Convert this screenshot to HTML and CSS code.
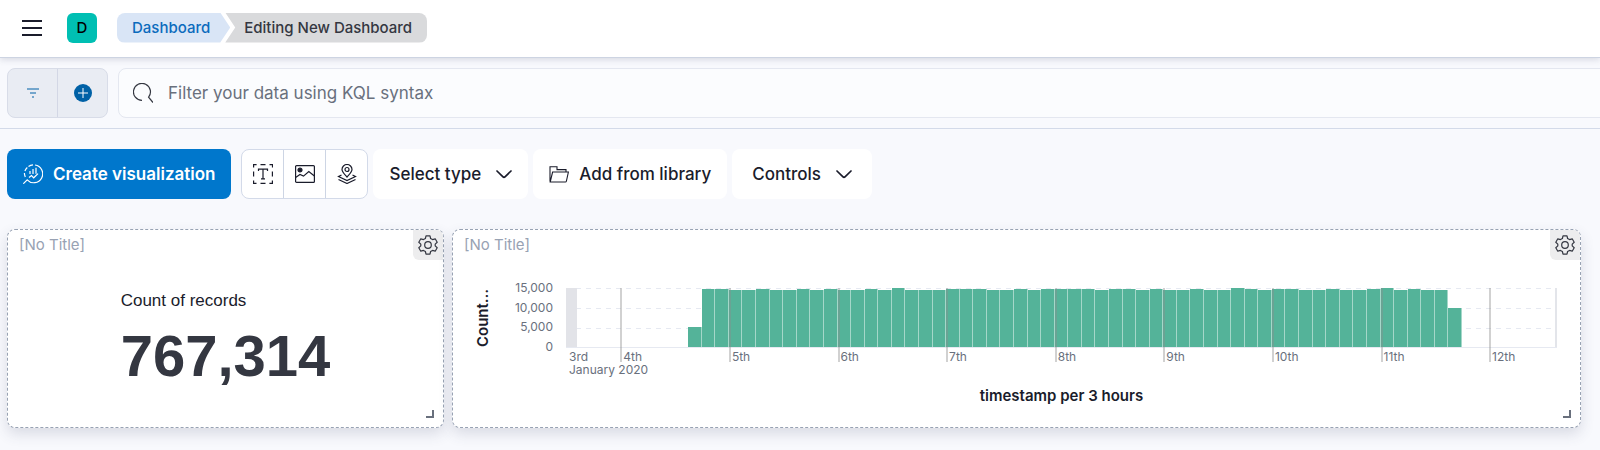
FILE: index.html
```html
<!DOCTYPE html>
<html lang="en">
<head>
  <meta charset="UTF-8">
  <meta name="viewport" content="width=device-width, initial-scale=1.0">
  <title>Editing New Dashboard</title>
  <link rel="stylesheet" href="styles.css">
</head>
<body>
  <header class="header">
    <button class="menu-button" aria-label="Menu">
      <svg width="20" height="16" viewBox="0 0 20 16" stroke="currentColor" stroke-width="2"><path d="M0 1h20M0 8h20M0 15h20"/></svg>
    </button>
    <span class="space-avatar">D</span>
    <nav class="breadcrumbs" aria-label="Breadcrumbs">
      <a class="crumb" href="#">Dashboard</a>
      <span class="crumb current" aria-current="page">Editing New Dashboard</span>
    </nav>
  </header>

  <form class="query-bar">
    <div class="filter-group">
      <button type="button" aria-label="Saved queries">
        <svg width="12" height="10" viewBox="0 0 12 10" stroke="currentColor"><path d="M0 1h12M3 5h6M5 9h2"/></svg>
      </button>
      <button type="button" aria-label="Add filter">
        <svg width="18" height="18" viewBox="0 0 18 18"><circle cx="9" cy="9" r="9" fill="currentColor"/><path d="M9 4v10M4 9h10" stroke="#fff"/></svg>
      </button>
    </div>
    <div class="search">
      <svg width="20" height="20" viewBox="0 0 20 20" fill="none" stroke="currentColor" stroke-width="1.2"><path d="M9 17.4A8.5 8.5 0 1 1 15.6 14.200L20 19.500"/></svg>
      <input type="text" aria-label="Search" placeholder="Filter your data using KQL syntax">
    </div>
  </form>

  <div class="toolbar">
    <button class="create-button">
      <svg width="20" height="20" viewBox="0 0 20 20" fill="none" stroke="currentColor" stroke-width="1.2">
        <path d="M.3 19.700 4.200 15.800A8.900 8.900 0 1 0 12 1M10 .8A8.900 8.900 0 0 0 5.500 2.400M4.300 3.500A8.900 8.900 0 0 0 1.900 7M1.400 9A8.900 8.900 0 0 0 2.300 13"/>
        <path d="M7 7v3M10 5v5M13 3.800v6M6 13.500l2.500-2 2.200 2.300 4.300-4.200"/>
      </svg>
      Create visualization
    </button>
    <div class="icon-group">
      <button aria-label="Add text">
        <svg width="20" height="20" viewBox="0 0 20 20" fill="none" stroke="currentColor" stroke-width="1.200"><path d="M.6 3.500V.6h3M7.500.6h5M16.500.6h3v2.900M19.400 7.500v5M19.400 16.500v2.900h-3M12.500 19.400h-5M3.500 19.400H.6v-2.900M.6 12.500v-5M5.500 7V5.200h9V7M10 5.200v9.600M8 14.800h4"/></svg>
      </button>
      <button aria-label="Add image">
        <svg width="20" height="18" viewBox="0 0 20 18" fill="none" stroke="currentColor" stroke-width="1.200"><rect x=".6" y=".6" width="18.800" height="16.800" rx="1"/><circle cx="5" cy="5" r="2" fill="currentColor"/><path d="M.6 12.500 5 9.500l3.500 1.600L13.800 6.500l5.600 4.500"/></svg>
      </button>
      <button aria-label="Add map">
        <svg width="20" height="20" viewBox="0 0 20 20" fill="none" stroke="currentColor" stroke-width="1.200"><path d="M10 13C7.500 10.200 5 8 5 5.500a5 5 0 0 1 10 0C15 8 12.500 10.200 10 13z"/><circle cx="10" cy="5.500" r="2"/><path d="M4.500 11 1.500 12.500l8.500 4 8.500-4-3-1.500M1.500 15.500l8.500 4 8.500-4"/></svg>
      </button>
    </div>
    <button class="tool-button">
      Select type
      <svg width="16" height="9" viewBox="0 0 16 9" fill="none" stroke="currentColor" stroke-width="1.700" stroke-linecap="round"><path d="M1 1l6 5.800q1 .9 2 0L15 1"/></svg>
    </button>
    <button class="tool-button library">
      <svg width="20" height="17" viewBox="0 0 20 17" fill="none" stroke="currentColor" stroke-width="1.100"><path d="M1 15.500V.8h7v2.800h9V6M1.200 16 3.600 6H19.400l-2 9.200q-.2.800-1 .8z"/></svg>
      Add from library
    </button>
    <button class="tool-button controls">
      Controls
      <svg width="16" height="9" viewBox="0 0 16 9" fill="none" stroke="currentColor" stroke-width="1.700" stroke-linecap="round"><path d="M1 1l6 5.800q1 .9 2 0L15 1"/></svg>
    </button>
  </div>

  <main class="dashboard">
    <section class="panel">
      <h2 class="panel-title">[No Title]</h2>
      <button class="panel-options" aria-label="Panel options">
        <svg width="20" height="20" viewBox="0 0 20 20" fill="none" stroke="currentColor" stroke-width="1.200" stroke-linejoin="round"><path d="M8 .8h4l.6 2.700 1.900 1.100 2.700-.8 2 3.400-2 1.900v1.800l2 1.900-2 3.400-2.700-.8-1.900 1.100-.6 2.700H8l-.6-2.700-1.900-1.100-2.700.8-2-3.400 2-1.900V9.100l-2-1.900 2-3.400 2.700.8 1.900-1.100z"/><circle cx="10" cy="10" r="3.300"/></svg>
      </button>
      <div class="metric">
        <div>
          <p class="metric-label">Count of records</p>
          <p class="metric-value">767,314</p>
        </div>
      </div>
      <span class="resize-handle"></span>
    </section>

    <section class="panel">
      <h2 class="panel-title">[No Title]</h2>
      <button class="panel-options" aria-label="Panel options">
        <svg width="20" height="20" viewBox="0 0 20 20" fill="none" stroke="currentColor" stroke-width="1.200" stroke-linejoin="round"><path d="M8 .8h4l.6 2.700 1.900 1.100 2.700-.8 2 3.400-2 1.900v1.800l2 1.900-2 3.400-2.700-.8-1.900 1.100-.6 2.700H8l-.6-2.700-1.900-1.100-2.700.8-2-3.400 2-1.900V9.100l-2-1.900 2-3.400 2.700.8 1.900-1.100z"/><circle cx="10" cy="10" r="3.300"/></svg>
      </button>
      <div class="chart">
        <div class="y-title">Count…</div>
        <div class="y-labels">
          <span>15,000</span>
          <span>10,000</span>
          <span>5,000</span>
          <span>0</span>
        </div>
        <div class="plot" id="plot"></div>
        <div class="x-labels" id="days"></div>
        <div class="x-month">January 2020</div>
        <div class="x-title">timestamp per 3 hours</div>
      </div>
      <span class="resize-handle"></span>
    </section>
  </main>

  <script src="chart.js"></script>
</body>
</html>
```
FILE: styles.css
```css
* {
  margin: 0;
  padding: 0;
  box-sizing: border-box;
}

body {
  font-family: Inter, "Liberation Sans", sans-serif;
  background-color: #f8f9fd;
  color: #1a1c2b;
  overflow-x: hidden;
}

button,
input {
  font: inherit;
  color: inherit;
  border: none;
  background: none;
}

button {
  cursor: pointer;
}

svg {
  display: block;
  flex-shrink: 0;
}

.header {
  position: relative;
  display: flex;
  align-items: center;
  height: 58px;
  padding: 0 22px 2px;
  background-color: #fff;
  border-bottom: 1px solid #cdd4e2;
  box-shadow: 0 2px 6px rgba(60, 70, 100, 0.16);
}

.space-avatar {
  width: 30px;
  margin: 0 20px 0 25px;
  border-radius: 6px;
  background-color: #00bfb3;
  color: #000;
  font-size: 15px;
  font-weight: 500;
  line-height: 30px;
  text-align: center;
}

.breadcrumbs {
  display: flex;
  font-size: 15px;
  font-weight: 500;
  line-height: 30px;
}

.crumb {
  padding: 0 20px 0 15px;
  border-radius: 8px 0 0 8px;
  background-color: #d9e5f6;
  color: #0b6bbd;
  text-decoration: none;
  clip-path: polygon(0 0, calc(100% - 10px) 0, 100% 50%, calc(100% - 10px) 100%, 0 100%);
}

.crumb.current {
  margin-left: -5px;
  padding: 0 15px 0 19px;
  border-radius: 0 8px 8px 0;
  background-color: #d9dadc;
  color: #343741;
  clip-path: polygon(0 0, 100% 0, 100% 100%, 0 100%, 10px 50%);
}

.query-bar {
  display: flex;
  gap: 10px;
  padding: 10px 0 10px 7px;
  border-bottom: 1px solid #d3dae9;
}

.filter-group {
  display: flex;
  width: 101px;
  border: 1px solid #d8dce8;
  border-radius: 8px;
  background-color: #e9ecf3;
  color: #0061a6;
}

.filter-group button {
  display: flex;
  flex: 1;
  align-items: center;
  justify-content: center;
  height: 48px;
}

.filter-group button + button {
  border-left: 1px solid #d3d7e5;
}

.search {
  display: flex;
  flex: 1;
  align-items: center;
  gap: 15px;
  margin-right: -10px;
  padding-left: 14px;
  border: 1px solid #e4e7f0;
  border-radius: 8px;
  background-color: #fbfcfe;
  color: #343741;
}

.search input {
  flex: 1;
  height: 48px;
  font-size: 17px;
  outline: none;
}

.search input::placeholder {
  color: #69707d;
  opacity: 1;
}

.toolbar {
  display: flex;
  gap: 5px;
  padding: 20px 7px 30px;
  font-size: 17px;
  font-weight: 500;
}

.toolbar button {
  display: flex;
  align-items: center;
  justify-content: center;
  height: 50px;
}

.create-button {
  gap: 10px;
  margin-right: 5px;
  padding: 0 16px;
  border-radius: 8px;
  background-color: #0077cc;
  color: #fff;
  font-weight: 600;
}

.icon-group {
  display: flex;
  width: 127px;
  overflow: hidden;
  border: 1px solid #d3dae9;
  border-radius: 8px;
  background-color: #fff;
}

.toolbar .icon-group button {
  flex: 1;
  height: 48px;
}

.icon-group button + button {
  border-left: 1px solid #cdd5e4;
}

.tool-button {
  gap: 15px;
  padding: 0 16px;
  border-radius: 8px;
  background-color: #fff;
}

.tool-button.library {
  gap: 10px;
}

.tool-button.controls {
  padding: 0 20px;
}

.dashboard {
  display: grid;
  grid-template-columns: 437fr 1129fr;
  gap: 8px;
  padding: 0 19px 22px 7px;
}

.panel {
  position: relative;
  height: 199px;
  border: 1px dashed #98a2b3;
  border-radius: 8px;
  background-color: #fff;
  box-shadow: 0 6px 14px rgba(60, 70, 100, 0.16);
}

.panel-title {
  padding-left: 11px;
  color: #98a2b3;
  font-size: 15px;
  font-weight: 400;
  line-height: 30px;
}

.panel-options {
  position: absolute;
  top: 0;
  right: 0;
  padding: 5px;
  border-radius: 0 6px 0 6px;
  background-color: #ededee;
  color: #343741;
}

.resize-handle {
  position: absolute;
  right: 9px;
  bottom: 9px;
  width: 8px;
  height: 8px;
  border: solid #69707d;
  border-width: 0 2px 2px 0;
}

.metric {
  display: flex;
  justify-content: center;
  padding-top: 31px;
  font-family: "Liberation Sans", Arial, sans-serif;
}

.metric-label {
  font-size: 17px;
  line-height: 20px;
}

.metric-value {
  margin-top: 15px;
  color: #343741;
  font-size: 58px;
  font-weight: bold;
  line-height: 60px;
}

.chart {
  display: grid;
  grid-template-columns: 20px 60px 1fr;
  grid-template-rows: 59px auto auto auto;
  margin: 28px 23px 0 20px;
  color: #69707d;
  font-size: 12px;
}

.y-title {
  writing-mode: vertical-rl;
  transform: rotate(180deg);
  color: #1a1c2b;
  font-size: 15px;
  font-weight: 600;
  line-height: 20px;
  text-align: center;
}

.y-labels {
  display: flex;
  flex-direction: column;
  justify-content: space-between;
  height: 78px;
  margin-top: -10px;
  line-height: 19px;
  text-align: right;
}

.plot {
  display: grid;
  grid-template-columns: repeat(73, 1fr);
  grid-template-rows: 59px;
  margin-left: 13px;
  background-image: repeating-linear-gradient(90deg, transparent 0 5px, #fff 5px 10px),
    linear-gradient(#e6e9f1 1px, transparent 1px);
  background-size: auto, 100% 20px;
  box-shadow: 0 1px #e6e9f1, inset -2px 0 #e3e5ea;
}

.partial {
  grid-area: 1 / 1;
  margin-right: 3px;
  background-color: #e2e3e8;
}

.bar {
  grid-row: 1;
  align-self: end;
  border-right: 1px solid #a5d7c9;
  background-color: #54b399;
}

.day-line {
  grid-row: 1;
  width: 2px;
  height: 74px;
  background-color: rgba(140, 140, 140, 0.4);
}

.x-labels {
  display: grid;
  grid-column: 3;
  grid-template-columns: repeat(73, 1fr);
  margin-left: 13px;
  padding-top: 4px;
  line-height: 12px;
}

.x-labels span {
  grid-row: 1;
  width: 0;
  padding-left: 3px;
  white-space: nowrap;
}

.x-month {
  grid-column: 3;
  padding-left: 16px;
  line-height: 14px;
}

.x-title {
  grid-column: 3;
  margin: 10px 0 0 13px;
  color: #1a1c2b;
  font-size: 15px;
  font-weight: 600;
  line-height: 18px;
  text-align: center;
}
```
FILE: chart.js
```js
// records per 3 hour bucket, starting at the 10th bucket
var counts = [
  5000, 14800, 14800, 14600, 14600, 14800, 14600, 14600, 14800, 14600, 14800, 14600,
  14500, 14700, 14600, 15000, 14600, 14600, 14600, 14800, 14800, 14800, 14600, 14600,
  14750, 14400, 14800, 14650, 14700, 14700, 14500, 14800, 14700, 14600, 14800, 14500,
  14600, 14700, 14500, 14500, 14900, 14700, 14500, 14800, 14700, 14500, 14500, 14750,
  14600, 14600, 14850, 15000, 14500, 14700, 14500, 14500, 9900
];
var days = ["4th", "5th", "6th", "7th", "8th", "9th", "10th", "11th", "12th"];
var plot = document.getElementById("plot");
var labels = document.getElementById("days");

function addCell(parent, tag, className, column) {
  var cell = document.createElement(tag);
  cell.className = className;
  cell.style.gridColumn = column;
  parent.appendChild(cell);
  return cell;
}

addCell(plot, "div", "partial", 1);
for (var i = 0; i < counts.length; i++) {
  var bar = addCell(plot, "div", "bar", 10 + i);
  bar.style.height = (counts[i] / 15000) * 100 + "%";
}

addCell(labels, "span", "day", 1).textContent = "3rd";
for (var j = 0; j < days.length; j++) {
  addCell(plot, "div", "day-line", 5 + j * 8);
  addCell(labels, "span", "day", 5 + j * 8).textContent = days[j];
}
```
